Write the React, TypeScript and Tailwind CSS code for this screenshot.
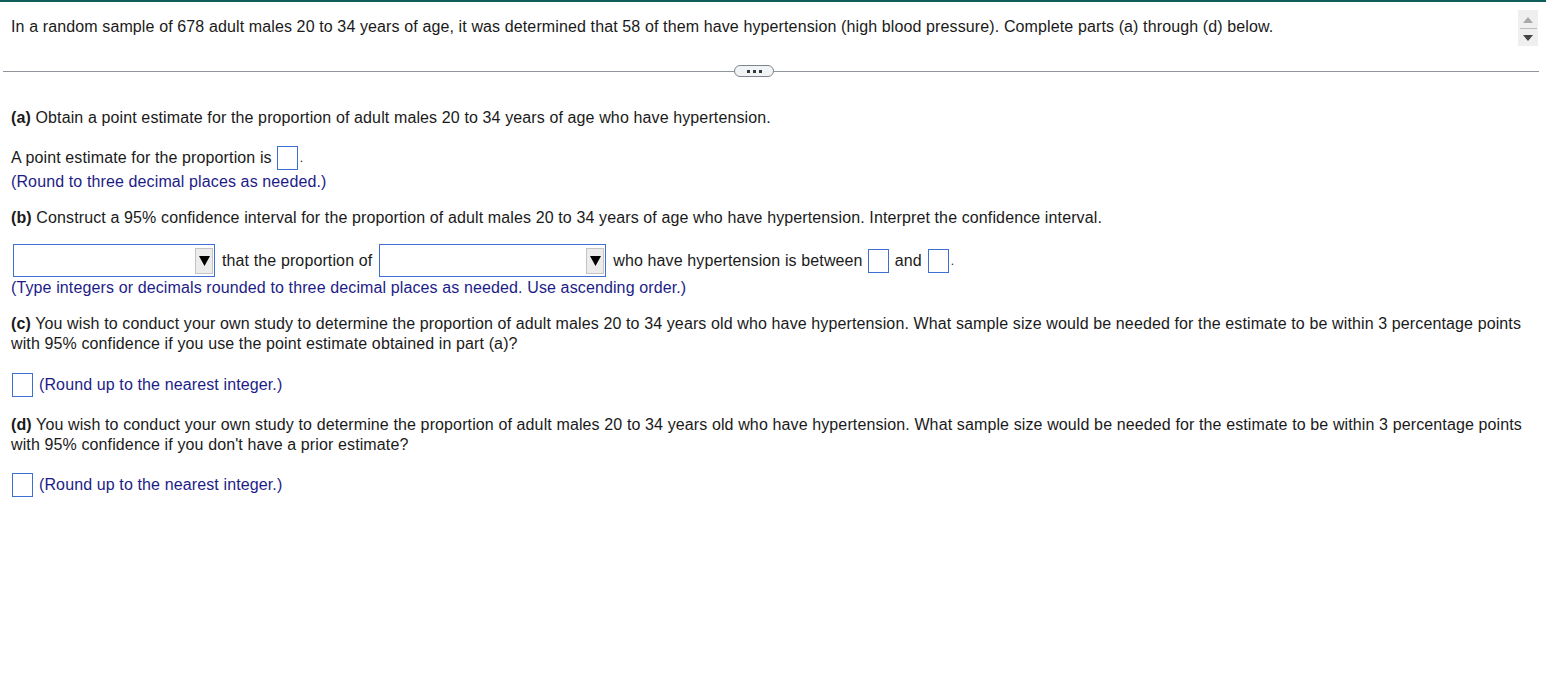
import React from "react";

const HINT = "text-[#1d1c87]";

function AnswerBox() {
  return <span className="inline-block h-[24px] w-[21px] border border-[#3d6fd3] bg-white" />;
}

function DropDown({ width }: { width: string }) {
  return (
    <span
      className={`relative inline-flex h-[33px] items-center justify-end border border-[#3d6fd3] bg-white pr-[1px] ${width}`}
    >
      <span className="flex h-[26px] w-[18px] items-center justify-center border border-[#c4c4c4] bg-[#ececec]">
        <svg width="11" height="12" viewBox="0 0 11 12">
          <path d="M0 1 L11 1 L5.5 11 Z" fill="#000" />
        </svg>
      </span>
    </span>
  );
}

export default function App() {
  return (
    <main
      className="min-h-screen bg-white text-[16px] leading-[20px] tracking-[0.12px] text-[#1a1a1a]"
      style={{ fontFamily: '"Liberation Sans", Arial, sans-serif' }}
    >
      <div className="h-[2px] bg-[#0f5d5a]" />

      <header className="relative pl-[11px] pt-[15px]">
        <p>
          In a random sample of 678 adult males 20 to 34 years of age, it was determined that 58 of them have
          hypertension (high blood pressure). Complete parts (a) through (d) below.
        </p>
        <div className="absolute right-[8px] top-[8px] flex h-[36px] w-[20px] flex-col items-center bg-[#efefef]">
          <svg className="mt-[7px]" width="10" height="6" viewBox="0 0 10 6">
            <path d="M5 0 L10 6 L0 6 Z" fill="#a9a9a9" />
          </svg>
          <div className="mt-[5px] h-[1px] w-[17px] bg-[#bdbdbd]" />
          <svg className="mt-[6px]" width="10" height="6" viewBox="0 0 10 6">
            <path d="M0 0 L10 0 L5 6 Z" fill="#444" />
          </svg>
        </div>
      </header>

      <div className="ml-[3px] mr-[7px] mt-[28px] flex h-[12px] items-center">
        <div className="h-[1px] w-[731px] bg-[#8f959a]" />
        <div className="flex h-[12px] w-[40px] items-center justify-center gap-[3px] rounded-full border border-[#7e858c] bg-[#f1f3f5]">
          <span className="h-[3px] w-[3px] bg-[#33383d]" />
          <span className="h-[3px] w-[3px] bg-[#33383d]" />
          <span className="h-[3px] w-[3px] bg-[#33383d]" />
        </div>
        <div className="h-[1px] flex-1 bg-[#8f959a]" />
      </div>

      <section className="pl-[11px] pr-[15px]">
        <p className="mt-[31px]">
          <b>(a)</b> Obtain a point estimate for the proportion of adult males 20 to 34 years of age who have
          hypertension.
        </p>
        <div className="mt-[18px] flex h-[24px] items-center">
          <span>A point estimate for the proportion is</span>
          <span className="ml-[5px] flex">
            <AnswerBox />
          </span>
          <span className="ml-[2px] text-[12px]">.</span>
        </div>
        <p className={`mt-[2px] ${HINT}`}>(Round to three decimal places as needed.)</p>

        <p className="mt-[16px]">
          <b>(b)</b> Construct a 95% confidence interval for the proportion of adult males 20 to 34 years of age who
          have hypertension. Interpret the confidence interval.
        </p>
        <div className="mt-[16px] flex h-[33px] items-center pl-[2px]">
          <DropDown width="w-[202px]" />
          <span className="ml-[7px]">that the proportion of</span>
          <span className="ml-[7px] flex">
            <DropDown width="w-[227px]" />
          </span>
          <span className="ml-[7px]">who have hypertension is between</span>
          <span className="ml-[5px] flex">
            <AnswerBox />
          </span>
          <span className="ml-[6px]">and</span>
          <span className="ml-[6px] flex">
            <AnswerBox />
          </span>
          <span className="ml-[2px] text-[12px]">.</span>
        </div>
        <p className={`mt-[1px] ${HINT}`}>
          (Type integers or decimals rounded to three decimal places as needed. Use ascending order.)
        </p>

        <p className="mt-[16px]">
          <b>(c)</b> You wish to conduct your own study to determine the proportion of adult males 20 to 34 years old
          who have hypertension. What sample size would be needed for the estimate to be within 3 percentage points
          with 95% confidence if you use the point estimate obtained in part (a)?
        </p>
        <div className="mt-[19px] flex h-[24px] items-center pl-[1px]">
          <AnswerBox />
          <span className={`ml-[6px] ${HINT}`}>(Round up to the nearest integer.)</span>
        </div>

        <p className="mt-[18px]">
          <b>(d)</b> You wish to conduct your own study to determine the proportion of adult males 20 to 34 years old
          who have hypertension. What sample size would be needed for the estimate to be within 3 percentage points
          with 95% confidence if you don't have a prior estimate?
        </p>
        <div className="mt-[18px] flex h-[24px] items-center pl-[1px]">
          <AnswerBox />
          <span className={`ml-[6px] ${HINT}`}>(Round up to the nearest integer.)</span>
        </div>
      </section>
    </main>
  );
}
